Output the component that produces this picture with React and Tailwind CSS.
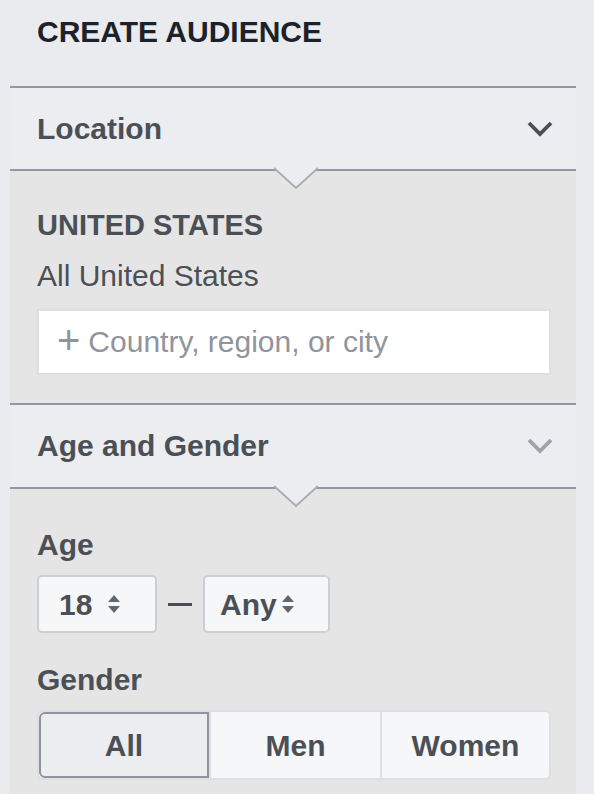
import React, { useState } from 'react';

const font = { fontFamily: '"Liberation Sans", Arial, Helvetica, sans-serif' };

const Chevron = ({ className }) => (
  <svg viewBox="0 0 26 16" className={className} fill="none" strokeLinecap="butt" strokeLinejoin="miter">
    <polyline points="2,2 13,13 24,2" stroke="currentColor" strokeWidth="3.8" />
  </svg>
);

const Notch = () => (
  <svg viewBox="0 0 44 24" className="absolute left-[264px] top-[-2px] w-[44px] h-[24px]">
    <polygon points="0,0 22,21 44,0" fill="#ebedf0" />
    <polyline points="0,1 22,21 44,1" fill="none" stroke="#a9adb3" strokeWidth="2" />
  </svg>
);

const Arrows = () => (
  <svg viewBox="0 0 12 18" className="w-[12px] h-[18px]">
    <polygon points="6,0 12,7 0,7" fill="#606770" />
    <polygon points="0,11 12,11 6,18" fill="#606770" />
  </svg>
);

const SectionHeader = ({ title, onToggle, dark, tall }) => (
  <div
    onClick={onToggle}
    className={`${tall ? 'h-[82px]' : 'h-[81px]'} bg-[#ebedf0] px-[27px] flex items-center justify-between cursor-pointer`}
  >
    <span className="text-[30px] leading-[34px] font-bold text-[#4b4f56]">{title}</span>
    <Chevron className={`w-[26px] h-[16px] -mr-[4px] ${dark ? 'text-[#4b4f56]' : 'text-[#9ea2a9]'}`} />
  </div>
);

const Divider = ({ notch }) => (
  <div className="relative h-[2px] bg-[#9197a3]">
    {notch && <Notch />}
  </div>
);

export default function App() {
  const [gender, setGender] = useState('All');

  return (
    <div className="min-h-screen w-full bg-[#e9ebee]" style={font}>
      <div className="ml-[10px] w-[566px] min-h-screen flex flex-col">
        <div className="h-[86px] pt-[15px] px-[27px]">
          <h1 className="text-[30px] leading-[34px] font-bold text-[#1d2129]">CREATE AUDIENCE</h1>
        </div>
        <Divider />

        <SectionHeader title="Location" dark />
        <Divider notch />
        <div className="bg-[#e5e5e6] px-[27px] pt-[38px] pb-[28px]">
          <div className="text-[29px] leading-[32px] font-bold text-[#4b4f56]">UNITED STATES</div>
          <div className="mt-[18px] text-[30px] leading-[34px] text-[#4b4f56]">All United States</div>
          <div className="mt-[16px] w-[514px] h-[66px] bg-white border-2 border-[#dddfe2] flex items-center pl-[18px]">
            <span className="text-[40px] leading-[40px] text-[#90949c] mr-[8px] -mt-[5px]">+</span>
            <span className="text-[30px] leading-[34px] text-[#90949c]">Country, region, or city</span>
          </div>
        </div>
        <Divider />

        <SectionHeader title="Age and Gender" tall />
        <Divider notch />
        <div className="flex-1 bg-[#e5e5e6] px-[27px] pt-[40px]">
          <div className="text-[30px] leading-[32px] font-bold text-[#4b4f56]">Age</div>
          <div className="mt-[14px] flex items-center">
            <div className="w-[120px] h-[58px] bg-[#f6f7f9] border-2 border-[#ccd0d5] rounded-[5px] flex items-center pl-[20px]">
              <span className="text-[30px] font-bold text-[#4b4f56]">18</span>
              <span className="ml-[16px]"><Arrows /></span>
            </div>
            <div className="w-[24px] h-[3px] bg-[#4b4f56] mx-[11px]" />
            <div className="w-[127px] h-[58px] bg-[#f6f7f9] border-2 border-[#ccd0d5] rounded-[5px] flex items-center pl-[15px]">
              <span className="text-[30px] font-bold text-[#4b4f56]">Any</span>
              <span className="ml-[5px]"><Arrows /></span>
            </div>
          </div>
          <div className="mt-[31px] text-[30px] leading-[32px] font-bold text-[#4b4f56]">Gender</div>
          <div className="mt-[14px] w-[514px] h-[70px] flex rounded-[6px] border-2 border-[#dddfe2] bg-[#f6f7f9] overflow-hidden">
            {['All', 'Men', 'Women'].map((g, i) => (
              <button
                key={g}
                onClick={() => setGender(g)}
                className={`h-full flex items-center justify-center text-[30px] font-bold text-[#4b4f56] ${
                  i === 0 ? 'w-[170px]' : i === 1 ? 'w-[171px]' : 'flex-1'
                } ${i > 0 ? 'border-l-2 border-[#dddfe2]' : ''} ${
                  gender === g ? 'bg-[#ebedf0] outline-2 outline-[#90949c] -outline-offset-2 rounded-l-[6px]' : ''
                }`}
              >
                {g}
              </button>
            ))}
          </div>
        </div>
      </div>
    </div>
  );
}
